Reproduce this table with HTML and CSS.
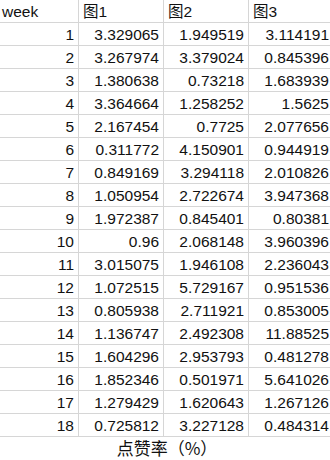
FILE: index.html
```html
<!DOCTYPE html>
<html lang="zh">
<head>
    <meta charset="UTF-8">
    <meta name="viewport" content="width=device-width, initial-scale=1.0">
    <title>点赞率</title>
    <link rel="stylesheet" href="styles.css">
</head>
<body>
    <div id="sheet">
        <table id="dataTable">
            <tr class="headRow">
                <td class="label">week</td>
                <td class="label">图1</td>
                <td class="label">图2</td>
                <td class="label">图3</td>
            </tr>
            <tr><td>1</td><td>3.329065</td><td>1.949519</td><td>3.114191</td></tr>
            <tr><td>2</td><td>3.267974</td><td>3.379024</td><td>0.845396</td></tr>
            <tr><td>3</td><td>1.380638</td><td>0.73218</td><td>1.683939</td></tr>
            <tr><td>4</td><td>3.364664</td><td>1.258252</td><td>1.5625</td></tr>
            <tr><td>5</td><td>2.167454</td><td>0.7725</td><td>2.077656</td></tr>
            <tr><td>6</td><td>0.311772</td><td>4.150901</td><td>0.944919</td></tr>
            <tr><td>7</td><td>0.849169</td><td>3.294118</td><td>2.010826</td></tr>
            <tr><td>8</td><td>1.050954</td><td>2.722674</td><td>3.947368</td></tr>
            <tr><td>9</td><td>1.972387</td><td>0.845401</td><td>0.80381</td></tr>
            <tr><td>10</td><td>0.96</td><td>2.068148</td><td>3.960396</td></tr>
            <tr><td>11</td><td>3.015075</td><td>1.946108</td><td>2.236043</td></tr>
            <tr><td>12</td><td>1.072515</td><td>5.729167</td><td>0.951536</td></tr>
            <tr><td>13</td><td>0.805938</td><td>2.711921</td><td>0.853005</td></tr>
            <tr><td>14</td><td>1.136747</td><td>2.492308</td><td>11.88525</td></tr>
            <tr><td>15</td><td>1.604296</td><td>2.953793</td><td>0.481278</td></tr>
            <tr><td>16</td><td>1.852346</td><td>0.501971</td><td>5.641026</td></tr>
            <tr><td>17</td><td>1.279429</td><td>1.620643</td><td>1.267126</td></tr>
            <tr><td>18</td><td>0.725812</td><td>3.227128</td><td>0.484314</td></tr>
        </table>
        <div id="caption">点赞率（%）</div>
    </div>
</body>
</html>
```

FILE: styles.css
```css
body {
    margin: 0;
    background-color: white;
    color: #111;
    font-family: "Liberation Sans", "Noto Sans CJK SC", sans-serif;
    overflow: hidden;
}

#sheet {
    width: 334px;
}

#dataTable {
    border-collapse: collapse;
    table-layout: fixed;
    width: 334px;
    font-size: 15.5px;
}

#dataTable td {
    height: 22px;
    padding: 0 4px 0 3px;
    border-right: 1px solid #d6d6d6;
    border-bottom: 1px solid #d6d6d6;
    text-align: right;
    vertical-align: bottom;
    line-height: 20px;
    white-space: nowrap;
    overflow: hidden;
}

#dataTable td:first-child {
    width: 72px;
}

#dataTable td.label {
    text-align: left;
    padding-left: 4px;
}

#dataTable td.label:first-child {
    padding-left: 2px;
}

#caption {
    width: 334px;
    text-align: center;
    font-family: "Noto Sans CJK SC", sans-serif;
    font-size: 17px;
    line-height: 22px;
}
```
